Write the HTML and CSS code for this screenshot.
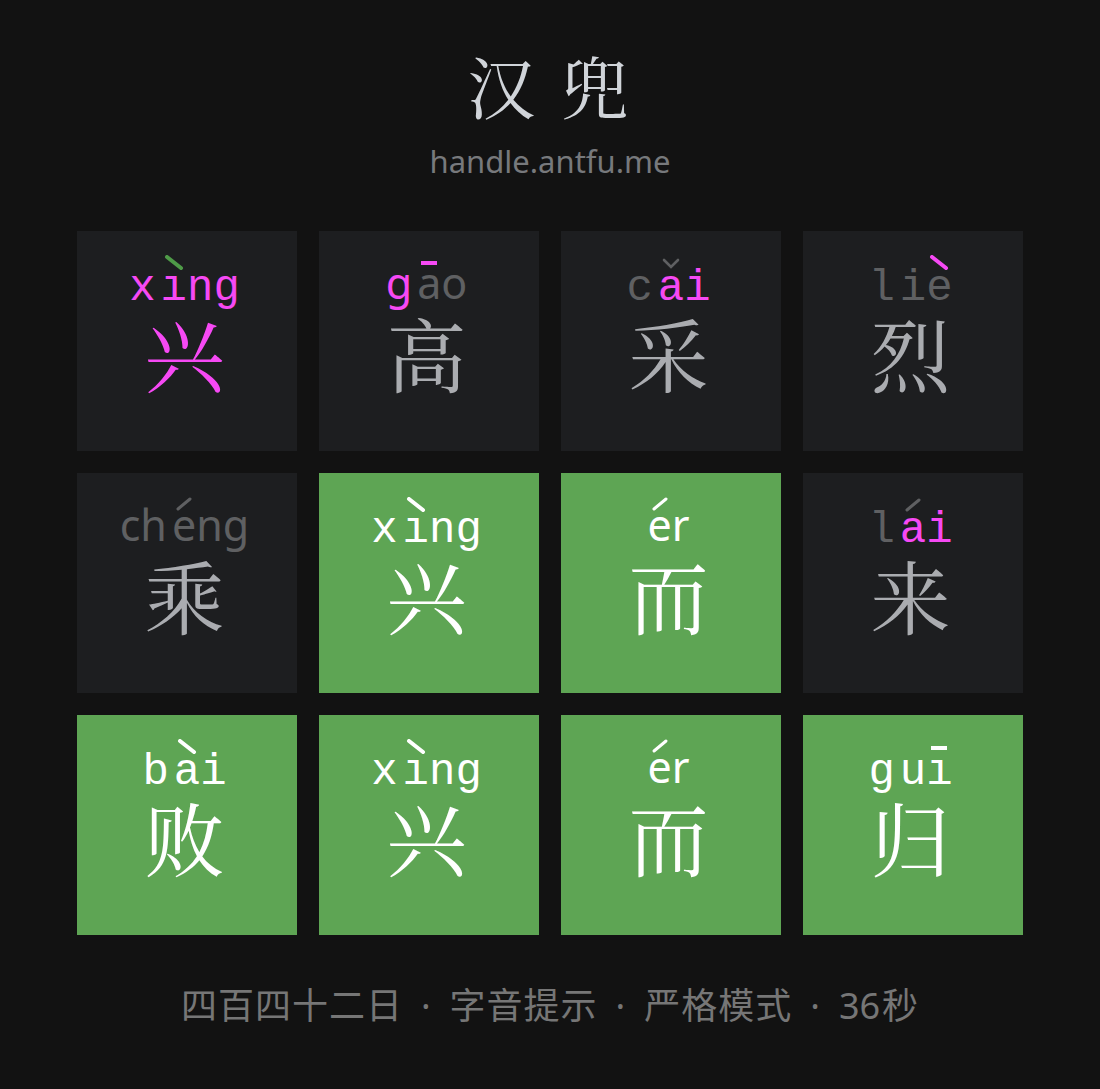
FILE: index.html
```html
<!DOCTYPE html>
<html lang="zh">
<head>
<meta charset="utf-8">
<title>汉兜</title>
<link rel="stylesheet" href="styles.css">
</head>
<body>
<div class="page">
  <h1 class="title">汉 兜</h1>
  <div class="sub">handle.antfu.me</div>

  <div class="grid">
    <!-- row 1 -->
    <div class="tile">
      <div class="py mono"><span class="ini pk">x</span><span class="fin pk"><span class="tv">ı<svg class="tone tg" viewBox="0 0 20 16"><path class="grave" d="M3 2 L17 13"/></svg></span>ng</span></div>
      <div class="ch pk">兴</div>
    </div>
    <div class="tile">
      <div class="py sans"><span class="ini pk">g</span><span class="fin gr"><span class="tv">a<svg class="tone pk" viewBox="0 0 20 16"><path class="macron" d="M2 9 L18 9"/></svg></span>o</span></div>
      <div class="ch gc">高</div>
    </div>
    <div class="tile">
      <div class="py mono"><span class="ini gr">c</span><span class="fin pk"><span class="tv">a<svg class="tone gr" viewBox="0 0 20 16"><path class="caron" d="M3 5 L10 12 L17 5"/></svg></span>i</span></div>
      <div class="ch gc">采</div>
    </div>
    <div class="tile">
      <div class="py mono"><span class="ini gr">l</span><span class="fin gr">i<span class="tv">e<svg class="tone pk" viewBox="0 0 20 16"><path class="grave" d="M3 2 L17 13"/></svg></span></span></div>
      <div class="ch gc">烈</div>
    </div>

    <!-- row 2 -->
    <div class="tile">
      <div class="py sans"><span class="ini gr">ch</span><span class="fin gr"><span class="tv">e<svg class="tone gr" viewBox="0 0 20 16"><path class="acute" d="M4 13 L16 3"/></svg></span>ng</span></div>
      <div class="ch gc">乘</div>
    </div>
    <div class="tile ok">
      <div class="py mono"><span class="ini">x</span><span class="fin"><span class="tv">ı<svg class="tone" viewBox="0 0 20 16"><path class="grave" d="M3 2 L17 13"/></svg></span>ng</span></div>
      <div class="ch">兴</div>
    </div>
    <div class="tile ok">
      <div class="py sans"><span class="fin"><span class="tv">e<svg class="tone" viewBox="0 0 20 16"><path class="acute" d="M4 13 L16 3"/></svg></span>r</span></div>
      <div class="ch">而</div>
    </div>
    <div class="tile">
      <div class="py mono"><span class="ini gr">l</span><span class="fin pk"><span class="tv">a<svg class="tone gr" viewBox="0 0 20 16"><path class="acute" d="M4 13 L16 3"/></svg></span>i</span></div>
      <div class="ch gc">来</div>
    </div>

    <!-- row 3 -->
    <div class="tile ok">
      <div class="py mono"><span class="ini">b</span><span class="fin"><span class="tv">a<svg class="tone" viewBox="0 0 20 16"><path class="grave" d="M3 2 L17 13"/></svg></span>i</span></div>
      <div class="ch">败</div>
    </div>
    <div class="tile ok">
      <div class="py mono"><span class="ini">x</span><span class="fin"><span class="tv">ı<svg class="tone" viewBox="0 0 20 16"><path class="grave" d="M3 2 L17 13"/></svg></span>ng</span></div>
      <div class="ch">兴</div>
    </div>
    <div class="tile ok">
      <div class="py sans"><span class="fin"><span class="tv">e<svg class="tone" viewBox="0 0 20 16"><path class="acute" d="M4 13 L16 3"/></svg></span>r</span></div>
      <div class="ch">而</div>
    </div>
    <div class="tile ok">
      <div class="py mono"><span class="ini">g</span><span class="fin">u<span class="tv">ı<svg class="tone" viewBox="0 0 20 16"><path class="macron" d="M2 9 L18 9"/></svg></span></span></div>
      <div class="ch">归</div>
    </div>
  </div>

  <div class="foot">四百四十二日<span class="dot">·</span>字音提示<span class="dot">·</span>严格模式<span class="dot">·</span><span class="num">36</span>秒</div>
</div>
</body>
</html>
```

FILE: styles.css
```css
html, body {
  margin: 0;
  padding: 0;
  background: #121212;
}

.page {
  width: 1100px;
  height: 1089px;
  display: flex;
  flex-direction: column;
  align-items: center;
  padding-top: 45px;
  box-sizing: border-box;
}

.title {
  margin: 0;
  font-family: "Noto Serif CJK SC", "Noto Serif CJK", "Noto Sans CJK SC", serif;
  font-weight: 400;
  font-size: 68px;
  line-height: 80px;
  letter-spacing: 4px;
  color: #d0d4d9;
}

.sub {
  margin-top: 16px;
  font-family: "Noto Sans", sans-serif;
  font-size: 31px;
  line-height: 40px;
  color: #77797c;
}

.grid {
  margin-top: 50px;
  display: grid;
  grid-template-columns: repeat(4, 220px);
  grid-auto-rows: 220px;
  gap: 22px;
}

.tile {
  background: #1d1e20;
  display: flex;
  flex-direction: column;
  align-items: center;
  padding-top: 33px;
  padding-right: 5px;
  box-sizing: border-box;
  color: #ffffff;
}

.tile.ok {
  background: #5ea554;
}

.py {
  height: 48px;
  line-height: 48px;
  white-space: nowrap;
}

.py.mono {
  font-family: "Liberation Mono", "DejaVu Sans Mono", monospace;
  font-size: 44px;
}

.py.sans {
  font-family: "Noto Sans", sans-serif;
  font-size: 43px;
  margin-top: -5px;
  margin-bottom: 5px;
}

.ini {
  margin-right: 5px;
}

.tv {
  position: relative;
  display: inline-block;
}

.tone {
  position: absolute;
  left: 50%;
  width: 20px;
  height: 16px;
  margin-left: -10px;
  fill: none;
  stroke: currentColor;
}

.py.mono .tone { top: -9px; }
.py.sans .tone { top: -5px; }

.grave { stroke-width: 4; stroke-linecap: round; }
.macron { stroke-width: 4; stroke-linecap: butt; }
.caron { stroke-width: 2.6; stroke-linecap: round; stroke-linejoin: miter; }
.acute { stroke-width: 3; stroke-linecap: round; }

.ch {
  font-family: "Noto Serif CJK SC", "Noto Serif CJK", "Noto Sans CJK SC", serif;
  font-size: 80px;
  line-height: 80px;
}

.pk { color: #f649f4; }
.gr { color: #5f6062; }
.gc { color: #aaacb0; }
.tg { color: #4f9b48; }

.foot {
  margin-top: 42px;
  font-family: "Noto Sans CJK SC", sans-serif;
  font-size: 36px;
  line-height: 52px;
  letter-spacing: 1px;
  color: #767676;
}

.dot {
  font-family: "Noto Sans", sans-serif;
  margin: 0 18px;
}

.num {
  font-family: "Noto Sans", sans-serif;
  letter-spacing: 0;
  margin-right: 2px;
}
```
